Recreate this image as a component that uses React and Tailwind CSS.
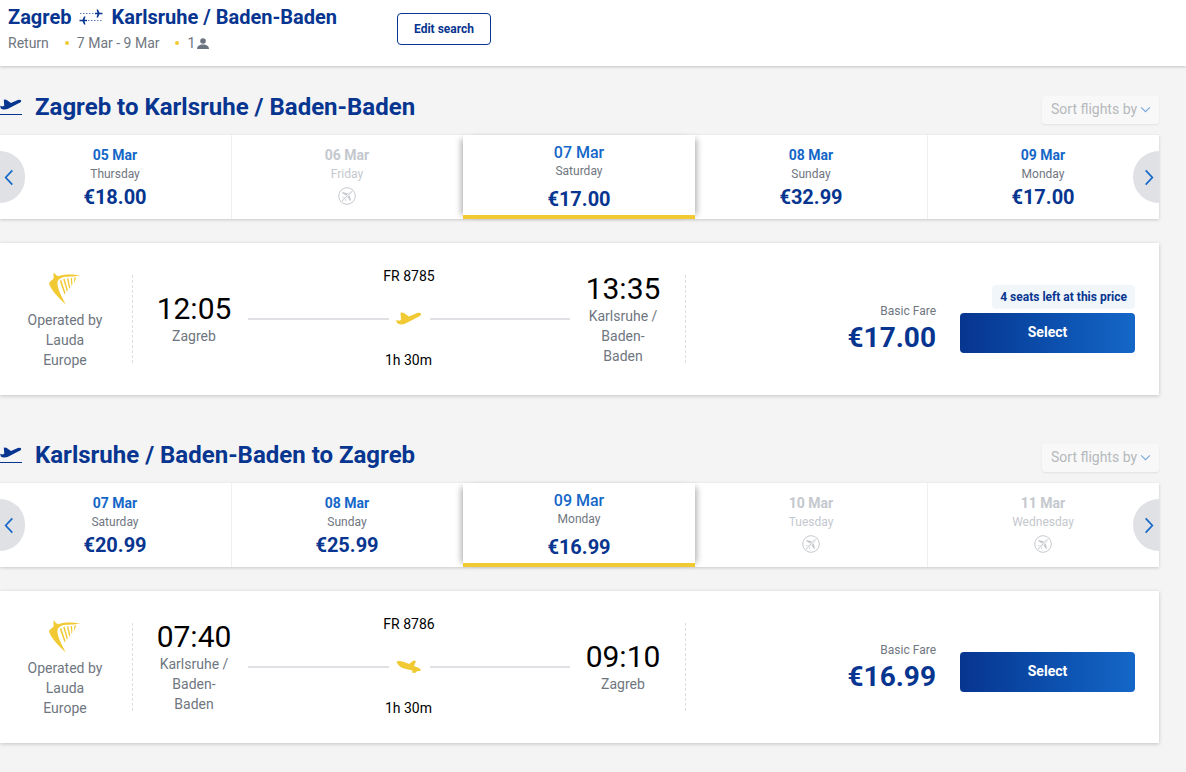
import React from "react";

const Plane = ({ className }) => (
  <svg viewBox="0 0 26 14" className={className} fill="currentColor">
    <path d="M24.800 1.500C25.800 3 24 4.200 22 5L9.500 11.500C6 13 3 12.500 1 11L.2 8L3 8.800L5 8L4.500 .5L7.500 .8L13 4.500L19 2C21 1 23.800 .3 24.800 1.500Z" />
  </svg>
);

const PlaneLanding = ({ className }) => (
  <svg viewBox="0 0 26 14" className={className} fill="currentColor">
    <path d="M.5 1.500L3 1C6 1 10 2.500 13 4L17.500 .5L20 1L18 6L22.500 7.800C25 9 25.300 10.500 24 11L21.500 11L19 13L16 12.500L16.500 10.500L8 8.500C4 7.500 1.500 4.500 .5 1.500Z" />
  </svg>
);

const Harp = ({ className }) => (
  <svg viewBox="0 0 34 34" className={className} fill="#f1c933">
    <path d="M5 0C7 2 8 3.500 10 4C15 1.500 25 1.500 33.500 3.500C28 4 24 4.500 20 4.500C14 4.500 9.500 6.500 9 10.500C8.500 16 13 25 18 34C11 28 2 19 0 11.500C1 8.500 4 8 5 6C5 4 4.500 2 5 0Z" />
    <path d="M11.500 9L13 8L17.500 21.500L16.500 23.500ZM15 7L16.500 6.500L20 18.500L19 20.500ZM19 6.500L20.500 6L22.500 15.500L21.500 17.500ZM23 6L24.500 5.500L24.800 12.500L24 14.500ZM27 5.500L29 5L26.800 10.500L26.300 11.500Z" />
  </svg>
);

const Person = () => (
  <svg viewBox="0 0 12 11" className="w-[12px] h-[11px]" fill="#6b7280">
    <circle cx="6" cy="3" r="2.800" />
    <path d="M0 11C0 8 2.500 6.500 6 6.500S12 8 12 11Z" />
  </svg>
);

const ReturnIcon = () => (
  <svg viewBox="0 0 24 16" className="w-[24px] h-[16px] mx-[8px]" fill="#073590">
    <path d="M1 4.500H21M3 11.500H23" stroke="#5f7fb8" strokeWidth="1" strokeDasharray="1.500 1.500" fill="none" />
    <path d="M17.500 .5L19 .5L20.500 3.800L23.500 3.800L23.500 5.200L20.500 5.200L19 8.500L17.500 8.500L18.500 5.200L16 5.200L16 3.800L18.500 3.800Z" />
    <path d="M6.500 7.500L5 7.500L3.500 10.800L.5 10.800L.5 12.200L3.500 12.200L5 15.500L6.500 15.500L5.500 12.200L8 12.200L8 10.800L5.500 10.800Z" />
  </svg>
);

const NoFlight = () => (
  <svg viewBox="0 0 18 18" className="w-[18px] h-[18px]" fill="none" stroke="#c4c8ce">
    <circle cx="9" cy="9" r="8.300" strokeWidth="1" />
    <path d="M13.800 4.200C12.500 3.800 11 5.500 10 6.500L4.800 5L4 6L8 8.500L6 10.500L4.300 10.200L3.900 10.800L6.200 11.900L7.300 14.100L7.900 13.700L7.600 12L9.500 10L12 14L13 13.200L11.500 8C12.500 7 14.200 5.500 13.800 4.200Z" fill="#c4c8ce" stroke="none" />
    <path d="M4 14L14.500 4" stroke="#ffffff" strokeWidth="2.200" />
    <path d="M4 14L14.500 4" strokeWidth="1" />
  </svg>
);

const Chevron = ({ dir }) => (
  <svg viewBox="0 0 12 20" className="w-[10px] h-[17px]" fill="none" stroke="#1467c8" strokeWidth="2">
    <path d={dir === "left" ? "M10 1.500L2 10L10 18.500" : "M2 1.500L10 10L2 18.500"} />
  </svg>
);

const DateCell = ({ date, day, price, selected, last }) => {
  if (selected) {
    return (
      <div className="relative z-10 w-[232px] -ml-[1px] mr-[1px] shrink-0 h-[84px] bg-white border-b-[4px] border-[#f1c933] shadow-[6px_0_6px_-4px_rgba(0,0,0,0.3),-6px_0_6px_-4px_rgba(0,0,0,0.3)] flex flex-col items-center">
        <div className="mt-[8px] text-[16px] leading-[20px] font-medium text-[#1467c8]">{date}</div>
        <div className="text-[12px] leading-[16px] mt-[0px] text-[#6f7680]">{day}</div>
        <div className="mt-[7px] text-[20px] leading-[26px] font-bold text-[#073590]">{price}</div>
      </div>
    );
  }
  return (
    <div className={`h-full pr-[1px] flex flex-col items-center ${last ? "flex-1" : "w-[232px] shrink-0 border-r border-[#eeeff1]"}`}>
      <div className={`mt-[10px] text-[14px] leading-[20px] font-bold ${price ? "text-[#1467c8]" : "text-[#c4c8ce]"}`}>{date}</div>
      <div className={`text-[12px] leading-[16px] mt-[1px] ${price ? "text-[#6f7680]" : "text-[#c4c8ce]"}`}>{day}</div>
      {price ? (
        <div className="mt-[2px] text-[20px] leading-[26px] font-bold text-[#073590]">{price}</div>
      ) : (
        <div className="mt-[5px]"><NoFlight /></div>
      )}
    </div>
  );
};

const TimeCol = ({ time, city, className }) => (
  <div className={`pb-[2px] flex flex-col items-center justify-center ${className}`}>
    <div className="text-[30px] leading-[35px] text-black">{time}</div>
    <div className="max-w-[76px] text-center text-[14px] leading-[20px] text-[#6f7680]">{city}</div>
  </div>
);

const FlightCard = ({ flight, from, to, dep, arr, price, seats, landing }) => (
  <div className="mt-[24px] h-[152px] bg-white shadow-[0_1px_4px_rgba(0,0,0,0.2)] flex">
    <div className="pt-[32px] flex">
      <div className="relative w-[133px] h-[88px] border-r border-dashed border-[#dcdee1] flex flex-col items-center">
        <Harp className="absolute -top-[3px] left-[49px] w-[32px] h-[33px]" />
        <div className="mt-[35px] w-[84px] mr-[2px] text-center text-[14px] leading-[20px] text-[#6f7680]">Operated by Lauda Europe</div>
      </div>
      <TimeCol time={dep} city={from} className="ml-[7px] w-[108px] h-[88px]" />
      <div className="w-[322px] -mt-[9px] flex flex-col items-center text-[14px] leading-[20px] text-black">
        <div>{flight}</div>
        <div className="mt-[23px] h-[20px] w-full flex items-center">
          <div className="flex-1 h-[2px] bg-[#dfe1e4]" />
          <div className="w-[41px] flex justify-center">
            {landing ? <PlaneLanding className="w-[26px] h-[14px] text-[#f1c933]" /> : <Plane className="w-[26px] h-[14px] text-[#f1c933]" />}
          </div>
          <div className="flex-1 h-[2px] bg-[#dfe1e4]" />
        </div>
        <div className="mt-[21px] -ml-[1px]">1h 30m</div>
      </div>
      <TimeCol time={arr} city={to} className="w-[106px] h-[88px]" />
      <div className="ml-[9px] h-[88px] border-r border-dashed border-[#dcdee1]" />
    </div>
    <div className={`flex-1 flex items-end justify-end pr-[24px] ${seats ? "pb-[42px]" : "pb-[51px]"}`}>
      <div className="mr-[24px] flex flex-col items-end">
        <div className="mb-[4px] text-[12px] leading-[16px] text-[#6f7680]">Basic Fare</div>
        <div className="text-[28px] leading-[30px] font-bold text-[#073590]">{price}</div>
      </div>
      <div className="w-[175px] flex flex-col items-end">
        {seats && (
          <div className="mb-[4px] h-[24px] px-[8px] rounded-[4px] bg-[#f1f6fb] text-[12px] leading-[24px] font-bold text-[#073590]">{seats}</div>
        )}
        <button className="w-full h-[40px] pb-[2px] rounded-[4px] bg-gradient-to-r from-[#073590] to-[#1467c8] text-[14px] font-bold text-white">Select</button>
      </div>
    </div>
  </div>
);

const Section = ({ title, days, card, first }) => (
  <section className={first ? "pt-[30px]" : "pt-[49px]"}>
    <div className="h-[28px] flex items-center justify-between">
      <div className="flex items-center -mt-[6px]">
        <div className="w-[22px] mr-[13px] flex flex-col">
          <Plane className="w-[22px] h-[12px] text-[#073590]" />
          <div className="h-[1px] mt-[3px] bg-[#073590]" />
        </div>
        <h2 className="text-[24px] leading-[28px] font-bold text-[#073590]">{title}</h2>
      </div>
      <div className="h-[28px] w-[117px] pl-[9px] pb-[2px] flex items-center gap-[3px] rounded-[3px] bg-[#f8f8f8] shadow-[0_1px_2px_rgba(0,0,0,0.08)] text-[14px] text-[#b5b8bc]">
        Sort flights by
        <svg viewBox="0 0 12 8" className="w-[11px] h-[7px]" fill="none" stroke="#7aa8de" strokeWidth="1.300">
          <path d="M1 1.500L6 6.500L11 1.500" />
        </svg>
      </div>
    </div>
    <div className="relative mt-[11px] h-[84px] bg-white shadow-[0_1px_3px_rgba(0,0,0,0.18)] flex">
      {days.map((d, i) => (
        <DateCell key={i} {...d} last={i === days.length - 1} />
      ))}
      <div className="absolute z-20 left-0 top-[16px] w-[25px] h-[52px] rounded-r-full bg-[#dfe1e4] flex items-center pl-[4px]">
        <Chevron dir="left" />
      </div>
      <div className="absolute z-20 right-0 top-[16px] w-[26px] h-[52px] rounded-l-full bg-[#dfe1e4] flex items-center pl-[11px]">
        <Chevron dir="right" />
      </div>
    </div>
    <FlightCard {...card} />
  </section>
);

const outbound = [
  { date: "05 Mar", day: "Thursday", price: "€18.00" },
  { date: "06 Mar", day: "Friday" },
  { date: "07 Mar", day: "Saturday", price: "€17.00", selected: true },
  { date: "08 Mar", day: "Sunday", price: "€32.99" },
  { date: "09 Mar", day: "Monday", price: "€17.00" },
];

const inbound = [
  { date: "07 Mar", day: "Saturday", price: "€20.99" },
  { date: "08 Mar", day: "Sunday", price: "€25.99" },
  { date: "09 Mar", day: "Monday", price: "€16.99", selected: true },
  { date: "10 Mar", day: "Tuesday" },
  { date: "11 Mar", day: "Wednesday" },
];

export default function App() {
  return (
    <div className="min-h-screen bg-[#f4f4f4] [font-family:Roboto,sans-serif]">
      {/* Top bar */}
      <header className="h-[66px] bg-white shadow-[0_1px_3px_rgba(0,0,0,0.2)] pl-[8px] flex items-start">
        <div className="w-[389px] pt-[5px]">
          <div className="flex items-center text-[20px] leading-[24px] font-bold text-[#073590]">
            Zagreb <ReturnIcon /> Karlsruhe / Baden-Baden
          </div>
          <div className="mt-[4px] flex items-center text-[14px] leading-[20px] text-[#6f7680]">
            <span>Return</span>
            <span className="ml-[16px] mr-[8px] w-[4px] h-[4px] rounded-full bg-[#f1c933]" />
            <span>7 Mar - 9 Mar</span>
            <span className="ml-[15px] mr-[9px] w-[4px] h-[4px] rounded-full bg-[#f1c933]" />
            <span className="mr-[2px]">1</span>
            <Person />
          </div>
        </div>
        <button className="mt-[13px] w-[94px] h-[32px] rounded-[4px] border border-[#073590] text-[12px] font-bold text-[#073590]">Edit search</button>
      </header>

      <main className="w-[1159px]">
        <Section
          first
          title="Zagreb to Karlsruhe / Baden-Baden"
          days={outbound}
          card={{ flight: "FR 8785", from: "Zagreb", to: "Karlsruhe / Baden-Baden", dep: "12:05", arr: "13:35", price: "€17.00", seats: "4 seats left at this price" }}
        />
        <Section
          title="Karlsruhe / Baden-Baden to Zagreb"
          days={inbound}
          card={{ flight: "FR 8786", from: "Karlsruhe / Baden-Baden", to: "Zagreb", dep: "07:40", arr: "09:10", price: "€16.99", landing: true }}
        />
      </main>
    </div>
  );
}
